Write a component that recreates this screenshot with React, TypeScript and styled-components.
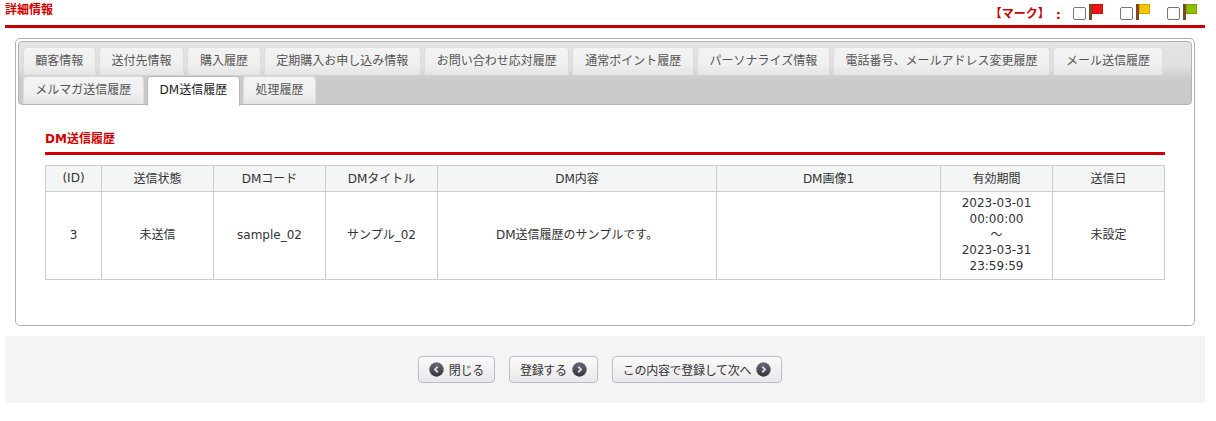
import React from "react";
import styled, { createGlobalStyle } from "styled-components";

const GlobalStyle = createGlobalStyle`
  html, body {
    margin: 0;
    padding: 0;
    background: #fff;
  }
  body {
    font-family: "DejaVu Sans", "Noto Sans CJK JP", sans-serif;
    font-size: 12px;
    color: #333;
  }
`;

const tabs = [
  "顧客情報",
  "送付先情報",
  "購入履歴",
  "定期購入お申し込み情報",
  "お問い合わせ応対履歴",
  "通常ポイント履歴",
  "パーソナライズ情報",
  "電話番号、メールアドレス変更履歴",
  "メール送信履歴",
  "メルマガ送信履歴",
  "DM送信履歴",
  "処理履歴",
];

const columns = [
  { label: "(ID)", width: 56 },
  { label: "送信状態", width: 112 },
  { label: "DMコード", width: 112 },
  { label: "DMタイトル", width: 112 },
  { label: "DM内容", width: 279 },
  { label: "DM画像1", width: 224 },
  { label: "有効期間", width: 112 },
  { label: "送信日", width: 112 },
];

function Flag({ color }: { color: string }) {
  return (
    <svg width="14" height="16" viewBox="0 0 14 16">
      <rect x="0" y="0" width="3" height="16" fill="#7a4a24" />
      <rect x="3" y="0" width="11" height="10" fill={color} />
      <rect x="3.5" y="0.5" width="10" height="9" fill="none" stroke="#000" strokeOpacity="0.15" />
    </svg>
  );
}

function RoundArrow({ left }: { left?: boolean }) {
  return (
    <ArrowIcon width="15" height="15" viewBox="0 0 15 15">
      <defs>
        <linearGradient id="arrowBall" x1="0" y1="0" x2="0" y2="1">
          <stop offset="0" stopColor="#6a6a78" />
          <stop offset="1" stopColor="#34343c" />
        </linearGradient>
      </defs>
      <circle cx="7.5" cy="7.5" r="7.2" fill="url(#arrowBall)" />
      <path
        d={left ? "M8.8 4.6 L5.9 7.5 L8.8 10.4" : "M6.2 4.6 L9.1 7.5 L6.2 10.4"}
        fill="none"
        stroke="#d8d8dc"
        strokeWidth="2"
      />
    </ArrowIcon>
  );
}

function App() {
  return (
    <Page>
      <GlobalStyle />
      <TopBar>
        <PageTitle>詳細情報</PageTitle>
        <Marks>
          <MarkLabel>【マーク】</MarkLabel>
          <MarkColon>:</MarkColon>
          {["#f01414", "#f8c400", "#8cc000"].map((c) => (
            <MarkItem key={c}>
              <MarkBox />
              <Flag color={c} />
            </MarkItem>
          ))}
        </Marks>
      </TopBar>

      <Panel>
        <TabBar>
          {tabs.map((t) => (
            <Tab key={t} $active={t === "DM送信履歴"}>
              {t}
            </Tab>
          ))}
        </TabBar>
        <PanelBody>
          <SectionTitle>DM送信履歴</SectionTitle>
          <Table>
            <colgroup>
              {columns.map((c) => (
                <col key={c.label} style={{ width: c.width }} />
              ))}
            </colgroup>
            <thead>
              <tr>
                {columns.map((c) => (
                  <Th key={c.label}>{c.label}</Th>
                ))}
              </tr>
            </thead>
            <tbody>
              <tr>
                <Td>3</Td>
                <Td>未送信</Td>
                <Td>sample_02</Td>
                <Td>サンプル_02</Td>
                <Td>DM送信履歴のサンプルです。</Td>
                <Td></Td>
                <Td>
                  2023-03-01
                  <br />
                  00:00:00
                  <br />～<br />
                  2023-03-31
                  <br />
                  23:59:59
                </Td>
                <Td>未設定</Td>
              </tr>
            </tbody>
          </Table>
        </PanelBody>
      </Panel>

      <Footer>
        <ActionButton>
          <RoundArrow left />
          閉じる
        </ActionButton>
        <ActionButton>
          登録する
          <RoundArrow />
        </ActionButton>
        <ActionButton>
          この内容で登録して次へ
          <RoundArrow />
        </ActionButton>
      </Footer>
    </Page>
  );
}

const Page = styled.div`
  width: 1200px;
  padding: 0 5px;
  height: 421px;
`;

const TopBar = styled.header`
  height: 25px;
  border-bottom: 3px solid #c80000;
  display: flex;
  justify-content: space-between;
  align-items: flex-start;
`;

const PageTitle = styled.h1`
  margin: 0;
  font-size: 12px;
  line-height: 21px;
  font-weight: bold;
  color: #d00000;
`;

const Marks = styled.div`
  display: flex;
  align-items: flex-start;
  gap: 17px;
  padding: 4px 8px 0 0;
`;

const MarkLabel = styled.span`
  font-size: 12px;
  line-height: 20px;
  font-weight: bold;
  color: #c80000;
  margin-right: -11px;
`;

const MarkColon = styled.span`
  font-size: 13px;
  line-height: 22px;
  font-weight: bold;
  color: #c80000;
  margin-right: -5px;
`;

const MarkItem = styled.div`
  display: flex;
  align-items: flex-start;
  gap: 3px;
`;

const MarkBox = styled.span`
  display: block;
  width: 11px;
  height: 11px;
  margin-top: 3px;
  border: 1px solid #767676;
  border-radius: 2px;
  background: #fff;
`;

const Panel = styled.section`
  margin: 10px 10px 0;
  height: 282px;
  border: 1px solid #b0b0b0;
  border-radius: 5px;
  padding: 2px;
`;

const TabBar = styled.nav`
  box-sizing: border-box;
  height: 64px;
  display: flex;
  flex-wrap: wrap;
  align-content: flex-start;
  column-gap: 3px;
  row-gap: 1px;
  padding: 5px 0 0 3.5px;
  border: 1px solid #b4b4b4;
  border-radius: 4px;
  background: linear-gradient(#e4e4e4 0, #e0e0e0 24px, #cacaca 38px, #cacaca 100%);
`;

const Tab = styled.div<{ $active?: boolean }>`
  box-sizing: border-box;
  height: ${(p) => (p.$active ? "30px" : "28px")};
  margin-bottom: ${(p) => (p.$active ? "-2px" : "0")};
  padding: 0 11.7px;
  line-height: 26px;
  white-space: nowrap;
  color: ${(p) => (p.$active ? "#222" : "#555")};
  border: 1px solid ${(p) => (p.$active ? "#b8b8b8" : "#dcdcdc")};
  border-bottom: none;
  border-radius: 4px 4px 0 0;
  background: ${(p) =>
    p.$active ? "#fff" : "linear-gradient(#f3f3f3 0, #f0f0f0 60%, #e4e4e4 100%)"};
  z-index: ${(p) => (p.$active ? 1 : 0)};
`;

const PanelBody = styled.div`
  padding: 24px 27px 0;
`;

const SectionTitle = styled.h2`
  margin: 0 0 10px;
  font-size: 12px;
  line-height: 21px;
  height: 23px;
  font-weight: bold;
  color: #d00000;
  border-bottom: 3px solid #d00000;
`;

const Table = styled.table`
  width: 1119px;
  table-layout: fixed;
  border-collapse: collapse;
  border: 1px solid #ccc;
`;

const Th = styled.th`
  height: 23px;
  padding: 0 0 2px;
  font-weight: normal;
  text-align: center;
  background: #f4f6f5;
  border: 1px solid #ccc;
`;

const Td = styled.td`
  padding: 4px;
  line-height: 15.8px;
  text-align: center;
  color: #333;
  border: 1px solid #ccc;
`;

const Footer = styled.footer`
  box-sizing: border-box;
  margin-top: 10px;
  height: 67px;
  background: #f4f4f4;
  display: flex;
  justify-content: center;
  gap: 14px;
  padding: 20px 10px 0 0;
`;

const ActionButton = styled.div`
  box-sizing: border-box;
  height: 27px;
  display: flex;
  align-items: center;
  gap: 5px;
  padding: 0 10px;
  letter-spacing: -0.3px;
  color: #333;
  border: 1px solid #bcbccc;
  border-radius: 4px;
  background: linear-gradient(#fafafa, #e8e8e8);
`;

const ArrowIcon = styled.svg`
  flex: none;
`;

export default App;
